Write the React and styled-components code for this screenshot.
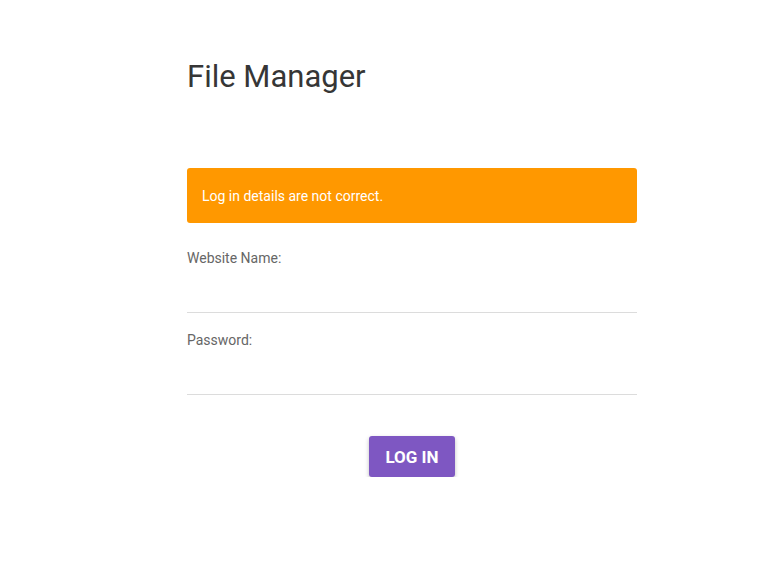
import styled, { createGlobalStyle } from 'styled-components';

const GlobalStyle = createGlobalStyle`
  html, body {
    margin: 0;
    padding: 0;
    background: #fff;
    font-family: Roboto, "Liberation Sans", sans-serif;
  }
`;

const Page = styled.main`
  width: 450px;
  padding: 55px 0 0 187px;
`;

const Title = styled.h1`
  margin: 0;
  font-size: 31px;
  font-weight: 400;
  line-height: 44px;
  color: #363636;
`;

const Alert = styled.div`
  margin-top: 69px;
  height: 55px;
  display: flex;
  align-items: center;
  padding: 0 15px;
  background: #ff9800;
  border-radius: 3px;
  color: #fff;
  font-size: 14px;
`;

const Field = styled.label`
  display: block;
  margin-top: ${p => p.$first ? '25px' : '17px'};
  border-bottom: 1px solid #dcdcdc;
  height: 64px;
  font-size: 14px;
  color: #666;
  line-height: 20px;
`;

const Actions = styled.div`
  display: flex;
  justify-content: center;
  margin-top: 41px;
`;

const Button = styled.button`
  height: 41px;
  padding: 0 16px;
  border: none;
  border-radius: 3px;
  background: #7e57c2;
  color: #fff;
  font-family: inherit;
  font-size: 17px;
  font-weight: 700;
  box-shadow: 0 2px 4px rgba(0, 0, 0, 0.25);
  cursor: pointer;
`;

export default function App() {
  return (
    <>
      <GlobalStyle />
      <Page>
        <Title>File Manager</Title>
        <Alert>Log in details are not correct.</Alert>
        <Field $first>Website Name:</Field>
        <Field>Password:</Field>
        <Actions>
          <Button>LOG IN</Button>
        </Actions>
      </Page>
    </>
  );
}
